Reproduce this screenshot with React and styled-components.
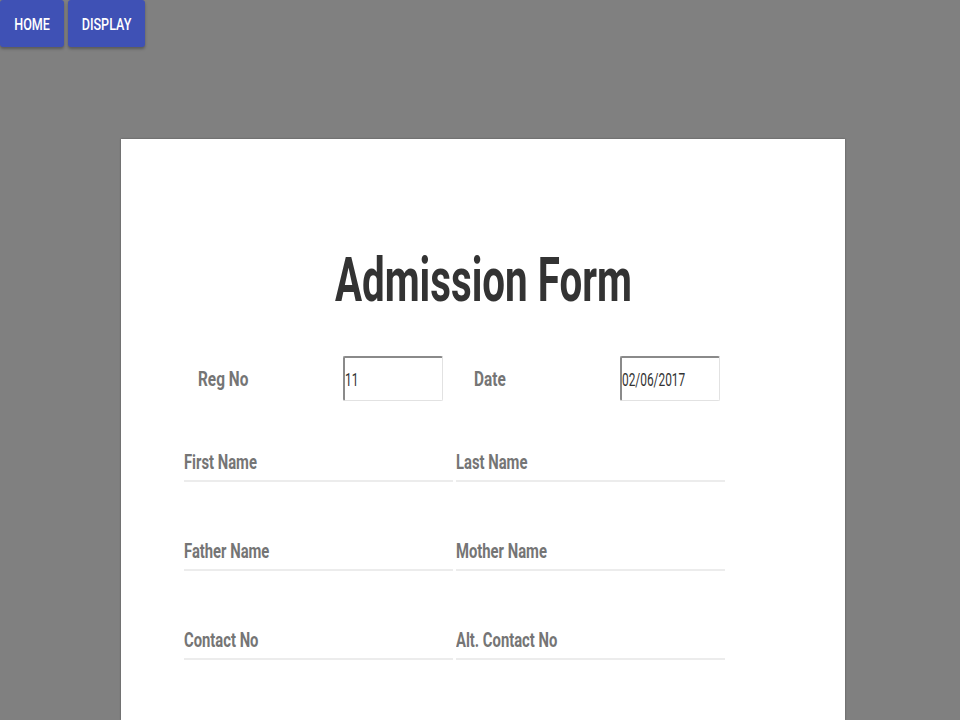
import React from "react";
import styled, { createGlobalStyle } from "styled-components";

const GlobalStyle = createGlobalStyle`
  html, body {
    margin: 0;
    padding: 0;
    background: #808080;
    font-family: Roboto, "Liberation Sans", sans-serif;
    overflow: hidden;
  }
`;

const Page = styled.div`
  width: 960px;
  height: 720px;
  background: #808080;
  display: flex;
  flex-direction: column;
`;

const Nav = styled.div`
  display: flex;
  gap: 4px;
`;

const NavButton = styled.button`
  height: 47px;
  width: ${(p) => p.$w}px;
  border: none;
  border-radius: 3px;
  background: #3f51b5;
  color: #fff;
  font-family: Roboto, sans-serif;
  font-weight: 500;
  font-size: 17px;
  padding: 0;
  box-shadow: 0 2px 3px rgba(0, 0, 0, 0.3);
  display: flex;
  align-items: center;
  justify-content: center;
`;

const Squeeze = styled.span`
  display: inline-block;
  transform: scaleX(${(p) => p.$s || 0.75});
  transform-origin: ${(p) => p.$o || "left"} center;
  white-space: nowrap;
`;

const Card = styled.div`
  margin: 92px 0 0 121px;
  width: 724px;
  flex: 1;
  background: #fff;
  padding: 105px 0 0 63px;
  box-sizing: border-box;
  box-shadow: 0 0 2px rgba(0, 0, 0, 0.35);
`;

const Title = styled.h1`
  margin: 0 0 0 -63px;
  text-align: center;
  font-size: 62px;
  line-height: 72px;
  font-weight: 700;
  color: #333;
`;

const TopRow = styled.div`
  display: flex;
  align-items: center;
  margin-top: 40px;
  height: 45px;
`;

const TopLabel = styled.div`
  width: ${(p) => p.$w}px;
  padding-left: ${(p) => p.$pl || 0}px;
  box-sizing: border-box;
  font-size: 20px;
  font-weight: 700;
  color: #757575;
`;

const Box = styled.div`
  width: 100px;
  height: 45px;
  box-sizing: border-box;
  border: 1px solid #e2e2e2;
  border-top: 2px solid #8a8a8a;
  border-left: 2px solid #8a8a8a;
  border-radius: 2px;
  display: flex;
  align-items: center;
  font-size: 18px;
  color: #333;
  margin-right: ${(p) => p.$mr || 0}px;
`;

const Grid = styled.div`
  display: grid;
  grid-template-columns: 269px 269px;
  column-gap: 3px;
  row-gap: 44px;
  margin-top: 36px;
`;

const Field = styled.div`
  height: 45px;
  padding-bottom: 6px;
  border-bottom: 2px solid #ececec;
  box-sizing: border-box;
  display: flex;
  align-items: flex-end;
  font-size: 20px;
  line-height: 24px;
  font-weight: 700;
  color: #757575;
`;

const fields = [
  "First Name",
  "Last Name",
  "Father Name",
  "Mother Name",
  "Contact No",
  "Alt. Contact No",
];

export default function App() {
  return (
    <Page>
      <GlobalStyle />
      <Nav>
        <NavButton $w={64}>
          <Squeeze $s={0.74} $o="center">HOME</Squeeze>
        </NavButton>
        <NavButton $w={77}>
          <Squeeze $s={0.74} $o="center">DISPLAY</Squeeze>
        </NavButton>
      </Nav>
      <Card>
        <Title>
          <Squeeze $s={0.65} $o="center">Admission Form</Squeeze>
        </Title>
        <TopRow>
          <TopLabel $w={159} $pl={14}>
            <Squeeze $s={0.77}>Reg No</Squeeze>
          </TopLabel>
          <Box $mr={31}>
            <Squeeze $s={0.66}>11</Squeeze>
          </Box>
          <TopLabel $w={146}>
            <Squeeze $s={0.77}>Date</Squeeze>
          </TopLabel>
          <Box>
            <Squeeze $s={0.66}>02/06/2017</Squeeze>
          </Box>
        </TopRow>
        <Grid>
          {fields.map((f) => (
            <Field key={f}>
              <Squeeze $s={0.74}>{f}</Squeeze>
            </Field>
          ))}
        </Grid>
      </Card>
    </Page>
  );
}
